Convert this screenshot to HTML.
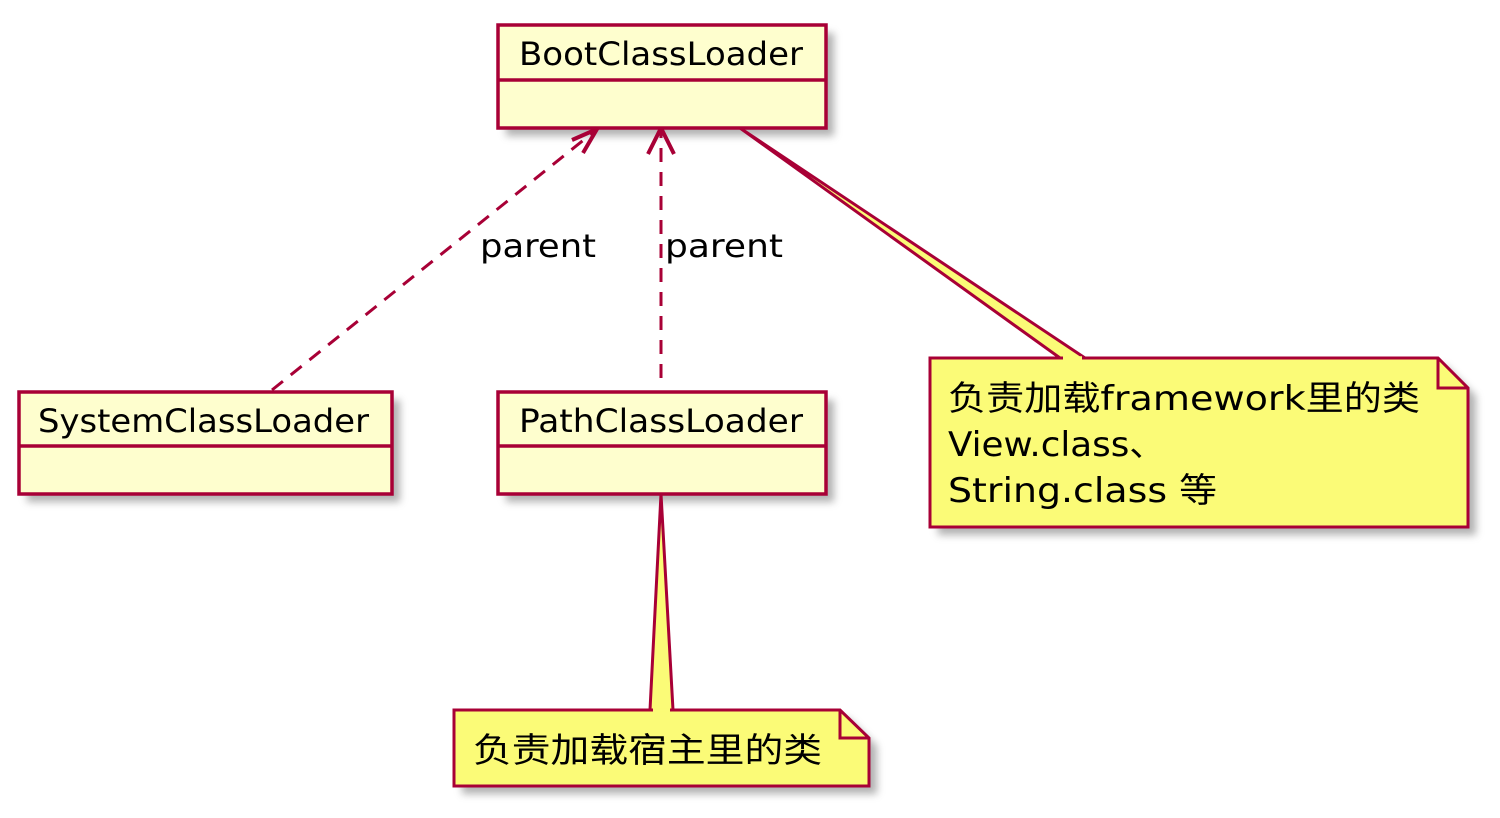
<!DOCTYPE html>
<html><head><meta charset="utf-8"><style>
html,body{margin:0;padding:0;background:#fff;}
svg{display:block;}
text{font-family:"DejaVu Sans","Noto Sans CJK SC",sans-serif;fill:#000;}
</style></head><body>
<svg width="1500" height="818" viewBox="0 0 1500 818" xmlns="http://www.w3.org/2000/svg">
<defs>
<filter id="sh" x="-10%" y="-10%" width="130%" height="140%">
<feGaussianBlur stdDeviation="4"/>
</filter>
</defs>
<g fill="#999" opacity="0.75" filter="url(#sh)">
<rect x="506" y="33" width="328" height="103"/>
<rect x="27" y="400" width="373" height="102"/>
<rect x="506" y="400" width="328" height="102"/>
<polygon points="938,366 1446,366 1476,396 1476,535 938,535"/>
<polygon points="462,718 848,718 877,746 877,794 462,794"/>
</g>
<g stroke="#A80036" stroke-width="3" fill="none">
<line x1="272" y1="390" x2="596" y2="130" stroke-dasharray="14,10"/>
<line x1="661" y1="378" x2="661" y2="132" stroke-dasharray="14,10"/>
<polyline points="572,140 597,129 583,153" stroke-width="4"/>
<polyline points="648,154 661,128 674,154" stroke-width="4"/>
</g>
<polygon points="740,128 1060,358 1085,358" fill="#FBFB77" stroke="#A80036" stroke-width="3"/>
<polygon points="661,494 650,710 673,710" fill="#FBFB77" stroke="#A80036" stroke-width="3"/>
<g fill="#FEFECE" stroke="#A80036" stroke-width="3.5">
<rect x="498" y="25" width="328" height="103"/>
<rect x="19" y="392" width="373" height="102"/>
<rect x="498" y="392" width="328" height="102"/>
</g>
<g stroke="#A80036" stroke-width="3.5">
<line x1="498" y1="80" x2="826" y2="80"/>
<line x1="19" y1="446" x2="392" y2="446"/>
<line x1="498" y1="446" x2="826" y2="446"/>
</g>
<text x="519" y="65" font-size="32" textLength="284" lengthAdjust="spacingAndGlyphs">BootClassLoader</text>
<text x="38" y="432" font-size="32" textLength="331" lengthAdjust="spacingAndGlyphs">SystemClassLoader</text>
<text x="519" y="432" font-size="32" textLength="284" lengthAdjust="spacingAndGlyphs">PathClassLoader</text>
<text x="480" y="257" font-size="32" textLength="116" lengthAdjust="spacingAndGlyphs">parent</text>
<text x="665" y="257" font-size="32" textLength="118" lengthAdjust="spacingAndGlyphs">parent</text>
<g fill="#FBFB77" stroke="#A80036" stroke-width="3">
<polygon points="930,358 1438,358 1468,388 1468,527 930,527"/>
<polyline points="1438,358 1438,388 1468,388" fill="none"/>
<polygon points="454,710 840,710 869,738 869,786 454,786"/>
<polyline points="840,710 840,738 869,738" fill="none"/>
</g>
<line x1="1063" y1="358" x2="1082" y2="358" stroke="#FBFB77" stroke-width="3.5"/>
<line x1="653" y1="710" x2="670" y2="710" stroke="#FBFB77" stroke-width="3.5"/>
<text x="948" y="410" font-size="34" textLength="472" lengthAdjust="spacingAndGlyphs">负责加载framework里的类</text>
<text x="948" y="456" font-size="34" textLength="217" lengthAdjust="spacingAndGlyphs">View.class、</text>
<text x="948" y="502" font-size="34" textLength="269" lengthAdjust="spacingAndGlyphs">String.class 等</text>
<text x="473" y="762" font-size="34" textLength="349" lengthAdjust="spacingAndGlyphs">负责加载宿主里的类</text>
</svg>
</body></html>
